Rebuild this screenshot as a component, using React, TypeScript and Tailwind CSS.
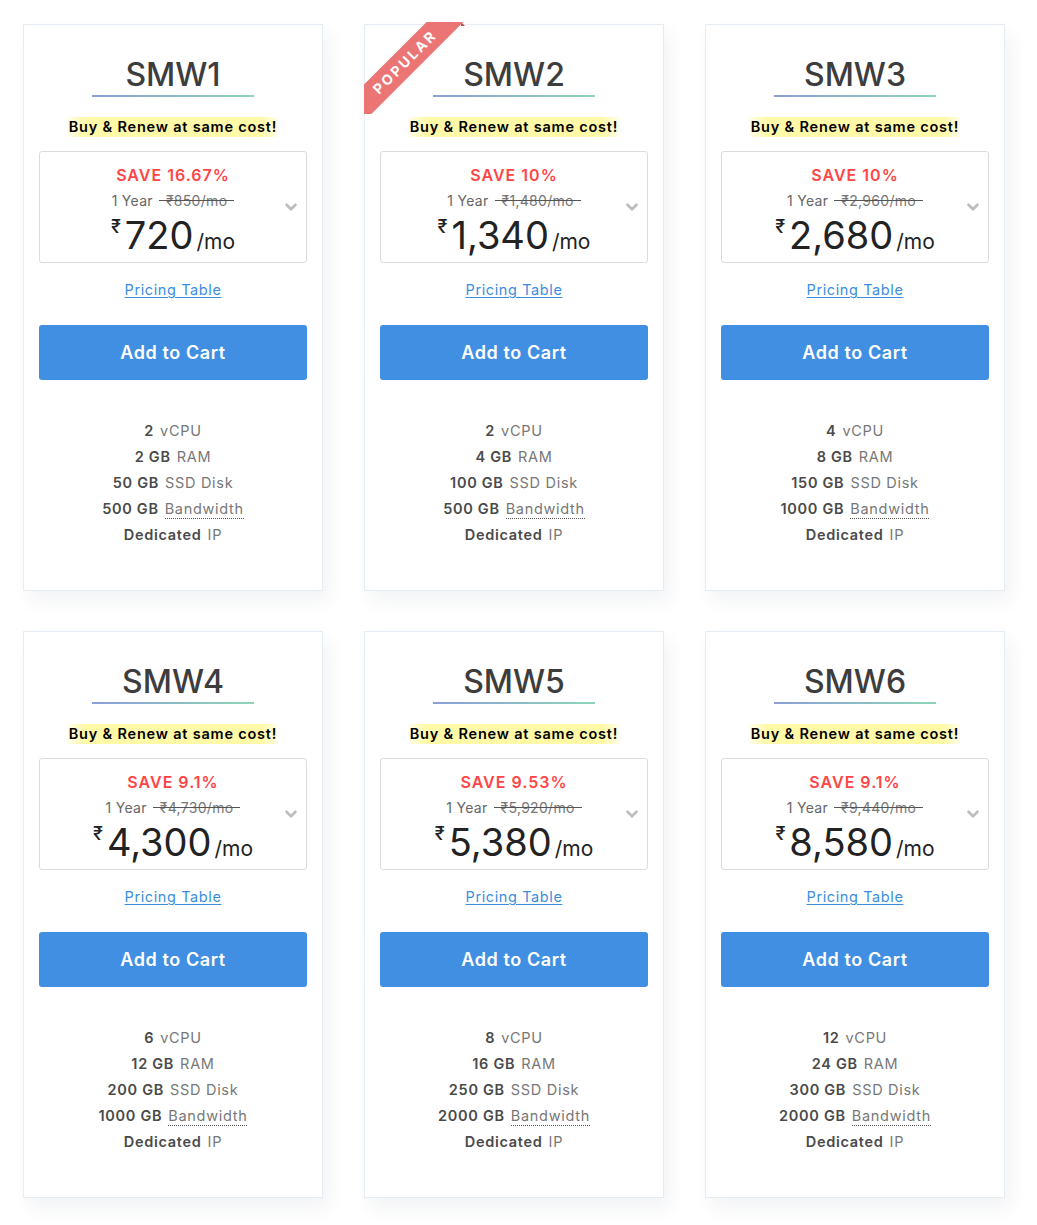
import { ChevronDown } from "lucide-react";

interface Plan {
  name: string;
  save: string;
  oldPrice: string;
  price: string;
  cpu: string;
  ram: string;
  disk: string;
  bandwidth: string;
  popular?: boolean;
}

const plans: Plan[] = [
  { name: "SMW1", save: "16.67%", oldPrice: "850", price: "720", cpu: "2", ram: "2 GB", disk: "50 GB", bandwidth: "500 GB" },
  { name: "SMW2", save: "10%", oldPrice: "1,480", price: "1,340", cpu: "2", ram: "4 GB", disk: "100 GB", bandwidth: "500 GB", popular: true },
  { name: "SMW3", save: "10%", oldPrice: "2,960", price: "2,680", cpu: "4", ram: "8 GB", disk: "150 GB", bandwidth: "1000 GB" },
  { name: "SMW4", save: "9.1%", oldPrice: "4,730", price: "4,300", cpu: "6", ram: "12 GB", disk: "200 GB", bandwidth: "1000 GB" },
  { name: "SMW5", save: "9.53%", oldPrice: "5,920", price: "5,380", cpu: "8", ram: "16 GB", disk: "250 GB", bandwidth: "2000 GB" },
  { name: "SMW6", save: "9.1%", oldPrice: "9,440", price: "8,580", cpu: "12", ram: "24 GB", disk: "300 GB", bandwidth: "2000 GB" },
];

function Ribbon() {
  return (
    <div className="absolute -left-px -top-[3px] w-[102px] h-[92px] overflow-hidden pointer-events-none">
      {/* folded tips */}
      <div className="absolute left-0 top-[86px] w-0 h-0 border-l-[4px] border-l-[#b94f4f] border-b-[4px] border-b-transparent" />
      <div className="absolute left-[97px] top-0 w-0 h-0 border-t-[4px] border-t-transparent border-l-[4px] border-l-[#b94f4f]" />
      <div className="absolute left-[-44px] top-[27px] w-[170px] h-[26px] bg-[#eb7474] -rotate-45 flex items-center justify-center">
        <span className="text-white text-[14px] font-bold tracking-[2.4px] leading-none">POPULAR</span>
      </div>
    </div>
  );
}

function Feature({ strong, label, dotted }: { strong: string; label: string; dotted?: boolean }) {
  return (
    <div className="h-[26px] flex items-center justify-center text-[14.5px] tracking-[0.7px]">
      <span className="font-semibold text-[#4a4a4a]">{strong}</span>
      <span
        className={
          dotted
            ? "ml-[6px] text-[#777] leading-[18px] border-b border-dotted border-[#555]"
            : "ml-[6px] text-[#777]"
        }
      >
        {label}
      </span>
    </div>
  );
}

function PlanCard({ plan }: { plan: Plan }) {
  return (
    <div className="relative w-[300px] bg-white border border-[#e6ecf3] shadow-[6px_10px_18px_rgba(30,50,90,0.06)] px-[15px] pt-[30px] pb-[42px]">
      {plan.popular && <Ribbon />}
      <div className="text-center text-[32px] leading-[40px] font-medium text-[#3d3d3d]">
        {plan.name}
      </div>
      <div className="mx-auto w-[162px] h-[2px] bg-[linear-gradient(90deg,#8c9ed9,#8ed6b6)]" />
      <div className="mt-[20px] flex justify-center">
        <span className="px-[1px] text-[14.5px] leading-[20px] font-semibold text-black tracking-[0.8px] bg-[linear-gradient(90deg,rgba(255,250,170,0.25),#fff9a8_8%,#fff9a8_92%,rgba(255,250,170,0.25))]">
          Buy &amp; Renew at same cost!
        </span>
      </div>
      <div className="relative mt-[14px] h-[112px] border border-[#dcdcdc] rounded-[3px] flex flex-col items-center pt-[12px]">
        <div className="text-[16px] leading-[22px] font-semibold text-[#ff4545] tracking-[1px]">
          SAVE {plan.save}
        </div>
        <div className="mt-[5px] h-[18px] flex items-center text-[14px] tracking-[0.3px] text-[#666]">
          <span>1 Year</span>
          <span className="relative ml-[6px] px-[7px] text-[#777]">
            ₹{plan.oldPrice}/mo
            <span className="absolute left-0 right-0 top-[10px] h-px bg-[#555]" />
          </span>
        </div>
        <div className="mt-[3px] flex items-baseline text-[#222]">
          <span className="self-start mt-[6px] mr-[4px] text-[18px] leading-none font-medium">₹</span>
          <span className="text-[38px] leading-[46px] font-normal">{plan.price}</span>
          <span className="ml-[3px] text-[21px] font-normal">/mo</span>
        </div>
        <ChevronDown
          size={18}
          strokeWidth={3.5}
          className="absolute right-[6px] top-[46px] text-[#bdbdbd]"
        />
      </div>
      <div className="mt-[16px] text-center leading-[20px]">
        <a className="text-[14.5px] leading-[20px] tracking-[0.6px] text-[#3b8ee0] underline underline-offset-2 cursor-pointer">
          Pricing Table
        </a>
      </div>
      <button className="mt-[25px] w-full h-[55px] bg-[#418fe2] rounded-[3px] text-white text-[18px] font-semibold tracking-[0.6px]">
        Add to Cart
      </button>
      <div className="mt-[38px]">
        <Feature strong={plan.cpu} label="vCPU" />
        <Feature strong={plan.ram} label="RAM" />
        <Feature strong={plan.disk} label="SSD Disk" />
        <Feature strong={plan.bandwidth} label="Bandwidth" dotted />
        <Feature strong="Dedicated" label="IP" />
      </div>
    </div>
  );
}

export default function App() {
  return (
    <div className="min-h-screen bg-white pl-[23px] pt-[24px] pb-[28px] font-['Inter','Liberation_Sans',sans-serif]">
      <div className="grid grid-cols-[300px_300px_300px] gap-x-[41px] gap-y-[40px]">
        {plans.map((p) => (
          <PlanCard key={p.name} plan={p} />
        ))}
      </div>
    </div>
  );
}
